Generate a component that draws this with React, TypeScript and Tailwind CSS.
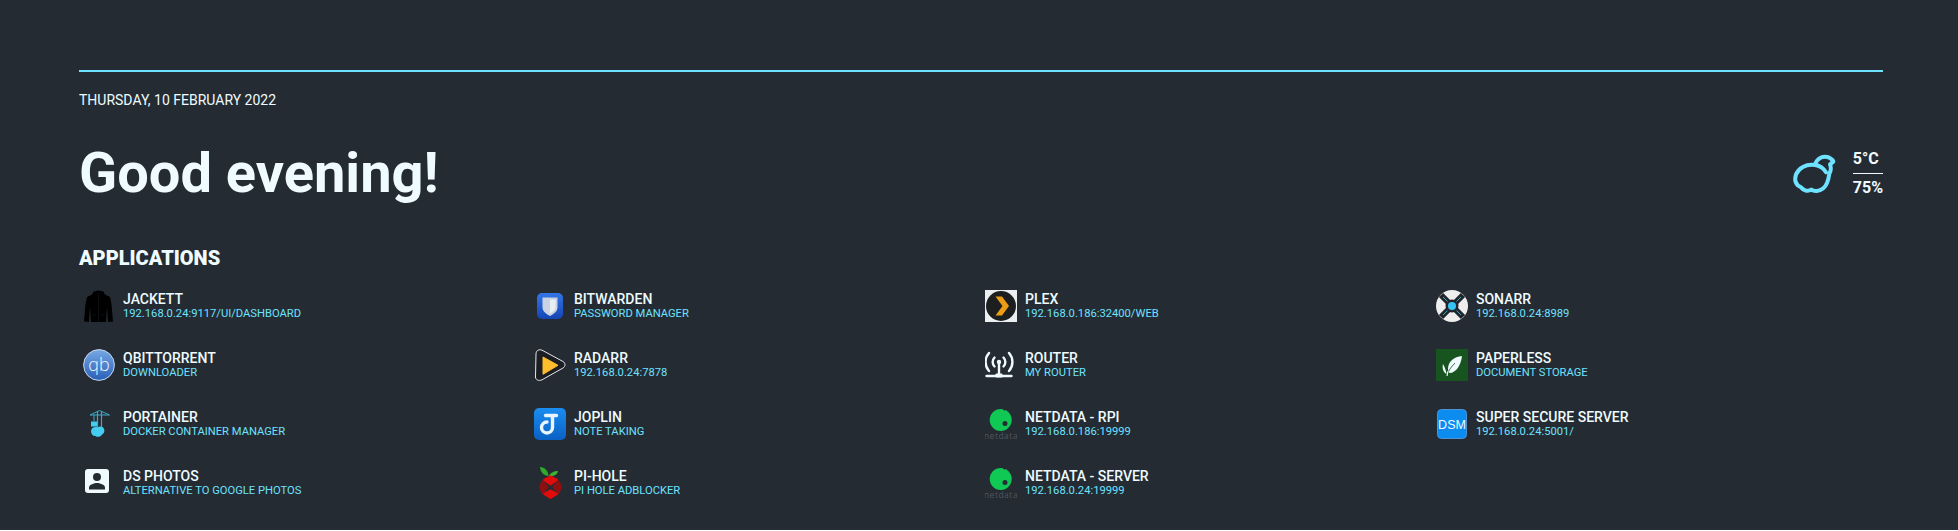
import type { ReactNode } from "react";

function Icon({ children }: { children: ReactNode }) {
	return (
		<svg viewBox="0 0 32 32" className="h-8 w-8 shrink-0" fill="none">
			{children}
		</svg>
	);
}

const JackettIcon = () => (
	<Icon>
		<path
			d="M10.500 1.500 15.500 0.500 20.500 1.500 22 4.500 27 7 28.500 14 30 31.500 25 32 24 17 23 32 8 32 7 17 6 32 1 31.500 2.500 14 4 7 9 4.500Z"
			fill="#000"
		/>
		<path d="M15.500 3V32" stroke="#14181b" strokeWidth="0.6" />
		<path d="M9 25h4M18 25h4" stroke="#14181b" strokeWidth="0.6" />
	</Icon>
);

const QbIcon = () => (
	<Icon>
		<defs>
			<linearGradient id="qb" x1="0" y1="0" x2="0" y2="1">
				<stop offset="0" stopColor="#77a7e4" />
				<stop offset="1" stopColor="#2a5fb8" />
			</linearGradient>
		</defs>
		<circle cx="16" cy="16" r="15.4" fill="url(#qb)" stroke="#c6d6ea" strokeWidth="1" />
		<text x="16" y="21.500" textAnchor="middle" fontSize="18" fill="#eef6ff" fontFamily="Open Sans, sans-serif" fontWeight="300">
			qb
		</text>
	</Icon>
);

const PortainerIcon = () => (
	<Icon>
		<path d="M7 7 16.500 2.500 26.500 7H7Z" stroke="#3fa9c4" strokeWidth="1" />
		<path d="M14.500 3V21M18.500 3V21" stroke="#3fa9c4" strokeWidth="1.200" />
		<path d="M11 7V13" stroke="#3fa9c4" strokeWidth="1" />
		<rect x="8" y="13.500" width="6" height="5" fill="#44cdf0" />
		<path
			d="M8.500 21.500c1-2.500 4-3 6-2 2-1.500 5-1 6 .5 1.500 2 1 5.500-1.500 6.500-1 2.500-5 3-6.500 1.500-3 .5-5.500-3.500-4-6.500Z"
			fill="#44cdf0"
		/>
	</Icon>
);

const DsPhotosIcon = () => (
	<Icon>
		<rect x="2" y="2" width="24" height="24" rx="3" fill="#effbff" />
		<circle cx="14" cy="10" r="4" fill="#242b33" />
		<path d="M6 22.500v-2c0-3 5.500-4.500 8-4.500s8 1.500 8 4.500v2Z" fill="#242b33" />
	</Icon>
);

const BitwardenIcon = () => (
	<Icon>
		<defs>
			<linearGradient id="bw" x1="0" y1="0" x2="0" y2="1">
				<stop offset="0" stopColor="#3576e6" />
				<stop offset="1" stopColor="#1345b5" />
			</linearGradient>
		</defs>
		<rect x="3" y="3" width="26" height="26" rx="5" fill="url(#bw)" />
		<path d="M8.500 7.500h15v10c0 4-4 6.500-7.500 8.500-3.500-2-7.500-4.500-7.500-8.500Z" fill="#c9d3e4" />
		<path d="M16 9.500h5.500v8c0 2.500-3 4.500-5.500 6Z" fill="#e9eef5" />
	</Icon>
);

const RadarrIcon = () => (
	<Icon>
		<path
			d="M2 5C2 1.500 5 0 8 1.200L29 12.500c2.600 1.500 2.600 5 0 6.500L8 30.800C5 32.300 1.500 31 1.500 28Z"
			fill="#1b1f24"
			stroke="#e4e7ea"
			strokeWidth="1"
		/>
		<path d="M9 8 24 16.300 9 25.300Z" fill="#fdbd2c" stroke="#fdbd2c" strokeWidth="1" strokeLinejoin="round" />
	</Icon>
);

const JoplinIcon = () => (
	<Icon>
		<defs>
			<linearGradient id="jp" x1="0" y1="0" x2="0" y2="1">
				<stop offset="0" stopColor="#1b8df0" />
				<stop offset="1" stopColor="#0b60c4" />
			</linearGradient>
		</defs>
		<rect width="32" height="32" rx="5" fill="url(#jp)" />
		<path
			d="M11.500 7.500H22.500M18.500 7.500V19.500a5.500 5.500 0 1 1-5.500-5.500"
			stroke="#eaf4fd"
			strokeWidth="3.400"
			strokeLinecap="round"
		/>
	</Icon>
);

const PiHoleIcon = () => (
	<Icon>
		<path d="M6 0c5 .5 8 3.500 8.500 9C10 8.500 6.500 5.500 6 0Z" fill="#2eaa2a" />
		<path d="M15 9c1-3 5-5 9-5-.5 3.500-4.500 6-9 5Z" fill="#3bb52f" />
		<path d="M16.500 9.500 23 13 16.500 17.500 10 13Z" fill="#e30c0c" stroke="#e30c0c" strokeWidth="2" strokeLinejoin="round" />
		<path d="M16.500 31 23 27 16.500 23.500 10 27Z" fill="#e30c0c" stroke="#e30c0c" strokeWidth="2" strokeLinejoin="round" />
		<path d="M8.500 14.500 13.500 20 8.500 26 6 20Z" fill="#8e1010" stroke="#8e1010" strokeWidth="2" strokeLinejoin="round" />
		<path d="M24.500 14.500 19.500 20 24.500 26 27 20Z" fill="#8e1010" stroke="#8e1010" strokeWidth="2" strokeLinejoin="round" />
	</Icon>
);

const PlexIcon = () => (
	<Icon>
		<rect width="32" height="32" fill="#eceff0" />
		<circle cx="16" cy="16" r="15" fill="#1d1e1f" />
		<path d="M10.500 6.500H17L24 16 17 25.500H10.500L17.500 16Z" fill="#eb9c14" />
	</Icon>
);

const RouterIcon = () => (
	<Icon>
		<g stroke="#effbff" strokeWidth="2.400" strokeLinecap="round">
			<path d="M9.500 8.500a6.400 6.400 0 0 0 0 9M18.500 8.500a6.400 6.400 0 0 1 0 9" />
			<path d="M4 4a13.500 13.500 0 0 0 0 18M24 4a13.500 13.500 0 0 1 0 18" />
			<path d="M14 15V26" />
			<path d="M1.500 27H26.500" />
		</g>
		<circle cx="14" cy="13" r="2.200" fill="#effbff" />
		<rect x="10.500" y="24.500" width="7" height="4" rx="1" fill="#effbff" />
	</Icon>
);

const NetdataIcon = () => (
	<Icon>
		<circle cx="15.700" cy="12" r="11" fill="#10c955" />
		<path d="M17.500 0.500 19.500 3 21 0.500Z" fill="#242b33" />
		<circle cx="20" cy="15.500" r="2.500" fill="#242b33" />
		<text x="16" y="31" textAnchor="middle" fontSize="8.500" letterSpacing="0.5" fill="#50575e" fontFamily="Open Sans, sans-serif">
			netdata
		</text>
	</Icon>
);

const SonarrIcon = () => (
	<Icon>
		<circle cx="16" cy="16" r="16" fill="#eeeeee" />
		<path d="M5 5 27 27M27 5 5 27" stroke="#20262b" strokeWidth="6" />
		<path d="M7 7 12 12M25 7 20 12M7 25 12 20M25 25 20 20" stroke="#35c5f4" strokeWidth="0.800" />
		<circle cx="16" cy="16" r="6.500" fill="#20262b" />
		<circle cx="16" cy="16" r="4" fill="#35c5f4" />
	</Icon>
);

const PaperlessIcon = () => (
	<Icon>
		<rect width="32" height="32" fill="#17541f" />
		<path d="M26 7c-8 1-14 5-14 13 0 2 .5 3 1.500 4C20 24 25 16 26 7Z" fill="#effbff" />
		<path d="M7 15c-1 4 0 8 3.500 10-.5-3-1.500-7-3.500-10Z" fill="#effbff" />
		<path d="M19 14c-4 4-7 8-8 13" stroke="#17541f" strokeWidth="0.800" />
		<path d="M11 27 12 22" stroke="#effbff" strokeWidth="1.200" />
	</Icon>
);

const DsmIcon = () => (
	<Icon>
		<rect x="1.500" y="1.500" width="29" height="29" rx="4" fill="#0b8cee" stroke="#4c93d8" strokeWidth="1" />
		<text x="16" y="20.500" textAnchor="middle" fontSize="12.500" fill="#effbff" fontFamily="Liberation Sans, sans-serif">
			DSM
		</text>
	</Icon>
);

const apps = [
	{ name: "Jackett", url: "192.168.0.24:9117/ui/dashboard", icon: JackettIcon },
	{ name: "Bitwarden", url: "Password Manager", icon: BitwardenIcon },
	{ name: "Plex", url: "192.168.0.186:32400/web", icon: PlexIcon },
	{ name: "Sonarr", url: "192.168.0.24:8989", icon: SonarrIcon },
	{ name: "qBittorrent", url: "Downloader", icon: QbIcon },
	{ name: "Radarr", url: "192.168.0.24:7878", icon: RadarrIcon },
	{ name: "Router", url: "My Router", icon: RouterIcon },
	{ name: "Paperless", url: "Document Storage", icon: PaperlessIcon },
	{ name: "Portainer", url: "Docker Container Manager", icon: PortainerIcon },
	{ name: "Joplin", url: "Note Taking", icon: JoplinIcon },
	{ name: "Netdata - RPI", url: "192.168.0.186:19999", icon: NetdataIcon },
	{ name: "Super Secure Server", url: "192.168.0.24:5001/", icon: DsmIcon },
	{ name: "DS Photos", url: "Alternative to Google Photos", icon: DsPhotosIcon },
	{ name: "Pi-hole", url: "Pi Hole Adblocker", icon: PiHoleIcon },
	{ name: "Netdata - Server", url: "192.168.0.24:19999", icon: NetdataIcon },
];

export default function App() {
	return (
		<div className="h-[530px] overflow-hidden bg-[#242b33] pt-[70px] pr-[75px] pl-[79px] font-['Roboto',sans-serif] text-[#effbff]">
			<div className="h-0.5 bg-[#6ee2ff]" />

			<p className="mt-[20px] text-sm leading-4 uppercase">Thursday, 10 February 2022</p>

			{/* Greeting + weather */}
			<div className="mt-[32px] flex items-center justify-between">
				<h1 className="text-[56px] leading-[66px] font-bold">Good evening!</h1>
				<div className="flex items-center gap-4">
					<svg viewBox="60 60 140 135" className="h-[45px] w-[46.67px]" fill="none">
						<path
							d="M135 102C140 82 160 72 178 80 185 84 190 88 190 92L180 100C184 110 183 120 178 128 176 142 174 160 160 172 148 182 132 182 124 176 112 184 98 176 92 168 78 162 72 150 78 130 86 112 106 98 135 102 152 104 162 114 168 124"
							stroke="#6ee2ff"
							strokeWidth="12"
							strokeLinecap="round"
							strokeLinejoin="round"
						/>
					</svg>
					<div className="text-base leading-[18px] font-bold">
						<div className="border-b border-[#effbff] pb-[5px]">5°C</div>
						<div className="pt-[5px]">75%</div>
					</div>
				</div>
			</div>

			<h2 className="mt-[40px] text-xl leading-6 font-black uppercase">Applications</h2>

			<div className="mt-[20px] grid grid-cols-4">
				{apps.map(({ name, url, icon: AppIcon }) => (
					<div key={name} className="flex h-[59px] items-start gap-2 px-1">
						<AppIcon />
						<div className="pt-px uppercase">
							<h5 className="text-sm leading-4 font-medium">{name}</h5>
							<span className="block text-[11.2px] leading-[13px] text-[#6ee2ff]">{url}</span>
						</div>
					</div>
				))}
			</div>
		</div>
	);
}
